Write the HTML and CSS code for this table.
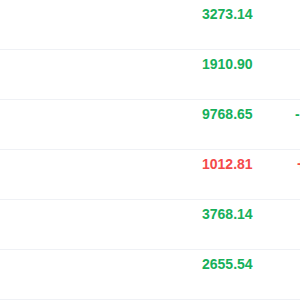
FILE: index.html
```html
<!DOCTYPE html>
<html lang="en">
<head>
<meta charset="utf-8">
<title>Quotes</title>
<link rel="stylesheet" href="styles.css">
</head>
<body>
<div class="viewport">
  <div class="table">
    <div class="row"><span class="name"></span><span class="price down">3273.14</span><span class="chg down">-0.5%</span></div>
    <div class="row"><span class="name"></span><span class="price down">1910.90</span><span class="chg down">-0.3%</span></div>
    <div class="row"><span class="name"></span><span class="price down">9768.65</span><span class="chg down">-12.34%</span></div>
    <div class="row"><span class="name"></span><span class="price up">1012.81</span><span class="chg up">+1.23%</span></div>
    <div class="row"><span class="name"></span><span class="price down">3768.14</span><span class="chg down">-0.8%</span></div>
    <div class="row"><span class="name"></span><span class="price down">2655.54</span><span class="chg down">-0.6%</span></div>
  </div>
</div>
</body>
</html>
```
FILE: styles.css
```css
html, body {
  margin: 0;
  padding: 0;
  background: #ffffff;
  overflow: hidden;
}
.viewport {
  width: 300px;
  height: 300px;
  overflow: hidden;
}
.table {
  width: 400px;
  font-family: "Liberation Sans", Arial, sans-serif;
  font-size: 14px;
  line-height: 16px;
  font-weight: bold;
}
.row {
  display: grid;
  grid-template-columns: 202px 79px 80px;
  align-items: start;
  box-sizing: border-box;
  height: 50px;
  padding-top: 6px;
  border-bottom: 1px solid #eff1f5;
}
.chg {
  text-align: center;
}
.down { color: #16b05a; }
.up { color: #f44a4a; }
```
